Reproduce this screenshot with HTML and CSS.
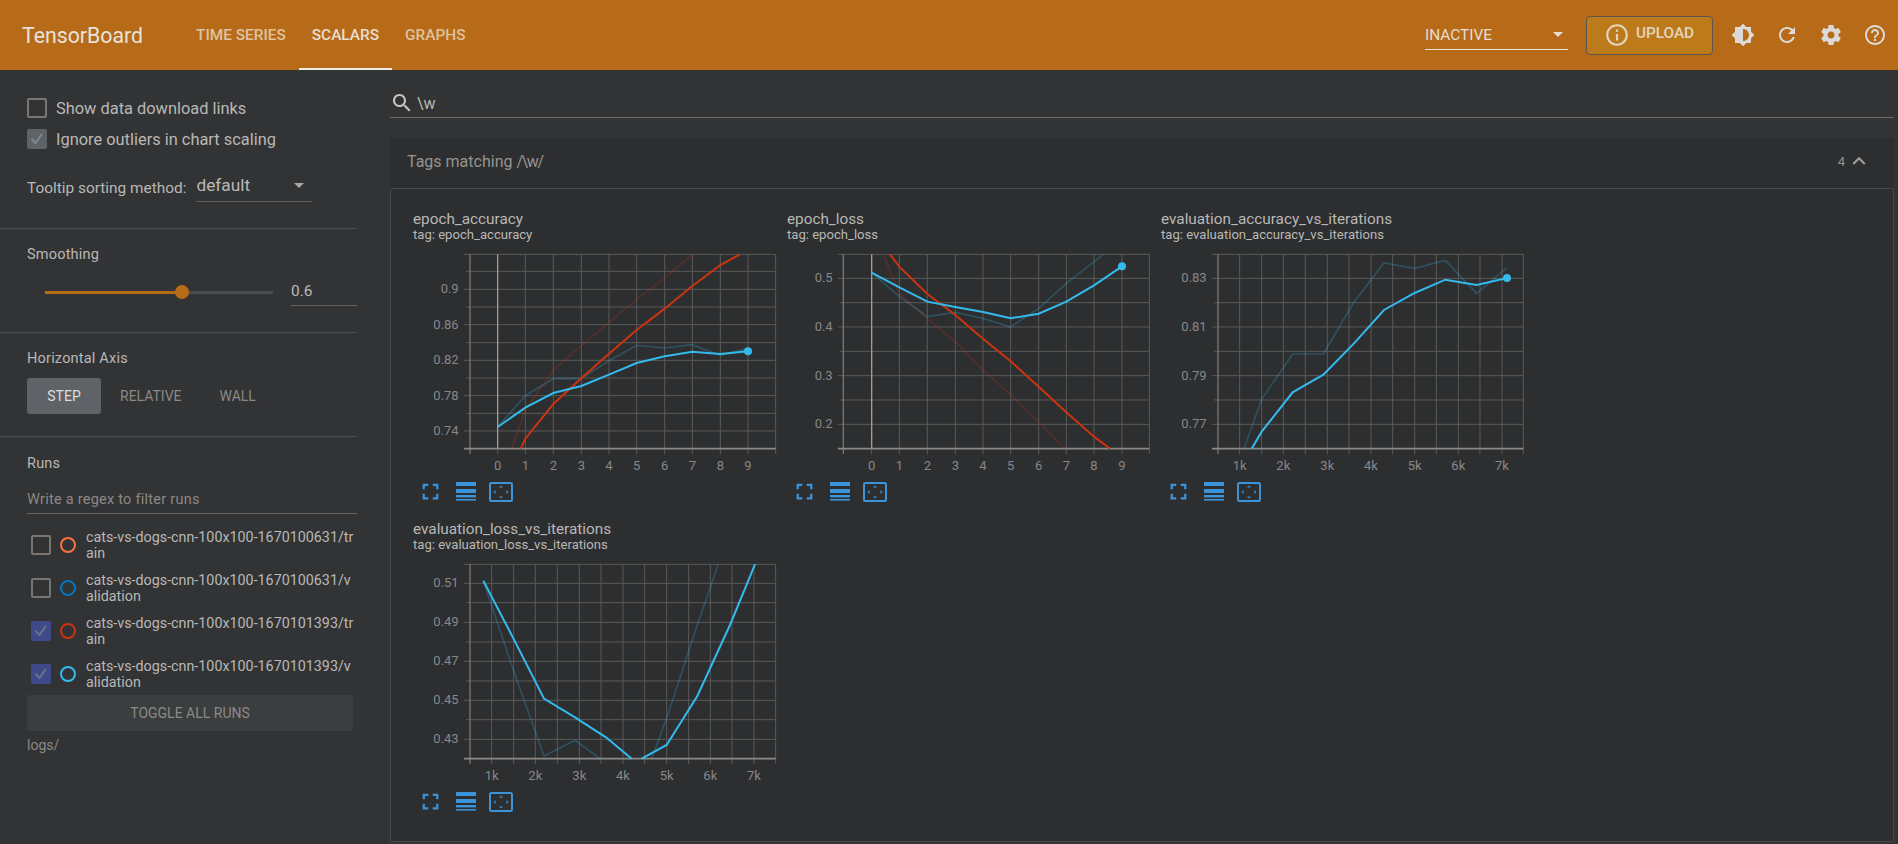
FILE: index.html
```html
<!DOCTYPE html>
<html lang="en">

<head>
  <meta charset="UTF-8" />
  <title>TensorBoard</title>
  <link rel="stylesheet" href="styles.css">
</head>

<body>
  <svg class="icon-defs" aria-hidden="true">
    <symbol id="i-fit" viewBox="0 0 24 24">
      <path d="M7 14H5v5h5v-2H7v-3zm-2-4h2V7h3V5H5v5zm12 7h-3v2h5v-5h-2v3zM14 5v2h3v3h2V5h-5z" />
    </symbol>
    <symbol id="i-lines" viewBox="0 0 20 19">
      <rect x="0" y="0" width="20" height="4" />
      <rect x="0" y="7" width="20" height="4" />
      <rect x="0" y="13" width="20" height="2.4" />
      <rect x="0" y="17" width="20" height="1.6" />
    </symbol>
    <symbol id="i-box" viewBox="0 0 24 20">
      <rect class="box-outline" x="1" y="1" width="22" height="18" rx="1.5" />
      <path d="M12 3.5l2 2h-4zM12 16.5l2-2h-4zM4.5 10l2-2v4zM19.5 10l-2-2v4z" />
    </symbol>
  </svg>

  <!-- Top bar -->
  <header class="topbar">
    <div class="logo">TensorBoard</div>
    <nav class="tabs">
      <a class="tab">TIME SERIES</a>
      <a class="tab active">SCALARS</a>
      <a class="tab">GRAPHS</a>
    </nav>
    <div class="topbar-right">
      <div class="plugin-select">
        <span>INACTIVE</span>
        <span class="caret"></span>
      </div>
      <button class="upload-btn">
        <svg class="info-icon" viewBox="0 0 24 24">
          <path d="M11 17h2v-6h-2v6zm1-15C6.48 2 2 6.48 2 12s4.48 10 10 10 10-4.48 10-10S17.52 2 12 2zm0 18c-4.41 0-8-3.59-8-8s3.59-8 8-8 8 3.59 8 8-3.59 8-8 8zM11 9h2V7h-2v2z" />
        </svg>
        <span class="upload-text">UPLOAD</span>
      </button>
      <div class="top-icons">
        <svg class="top-icon" viewBox="0 0 24 24">
          <path d="M20 15.31L23.31 12 20 8.69V4h-4.69L12 .69 8.69 4H4v4.69L.69 12 4 15.31V20h4.69L12 23.31 15.31 20H20v-4.69zM12 18V6c3.31 0 6 2.69 6 6s-2.69 6-6 6z" />
        </svg>
        <svg class="top-icon" viewBox="0 0 24 24">
          <path d="M17.65 6.35C16.2 4.9 14.21 4 12 4c-4.42 0-7.99 3.58-7.99 8s3.57 8 7.99 8c3.73 0 6.84-2.55 7.73-6h-2.08c-.82 2.33-3.04 4-5.65 4-3.31 0-6-2.69-6-6s2.69-6 6-6c1.66 0 3.14.69 4.22 1.78L13 11h7V4l-2.35 2.35z" />
        </svg>
        <svg class="top-icon" viewBox="0 0 24 24">
          <path d="M19.43 12.98c.04-.32.07-.64.07-.98s-.03-.66-.07-.98l2.11-1.65c.19-.15.24-.42.12-.64l-2-3.46c-.12-.22-.39-.3-.61-.22l-2.49 1c-.52-.4-1.08-.73-1.69-.98l-.38-2.65C14.46 2.18 14.25 2 14 2h-4c-.25 0-.46.18-.49.42l-.38 2.65c-.61.25-1.17.59-1.69.98l-2.49-1c-.23-.09-.49 0-.61.22l-2 3.46c-.13.22-.07.49.12.64l2.11 1.65c-.04.32-.07.65-.07.98s.03.66.07.98l-2.11 1.65c-.19.15-.24.42-.12.64l2 3.46c.12.22.39.3.61.22l2.49-1c.52.4 1.08.73 1.69.98l.38 2.65c.03.24.24.42.49.42h4c.25 0 .46-.18.49-.42l.38-2.65c.61-.25 1.17-.59 1.69-.98l2.49 1c.23.09.49 0 .61-.22l2-3.46c.12-.22.07-.49-.12-.64l-2.11-1.65zM12 15.5c-1.93 0-3.5-1.57-3.5-3.5s1.57-3.5 3.5-3.5 3.5 1.57 3.5 3.5-1.57 3.5-3.5 3.5z" />
        </svg>
        <svg class="top-icon" viewBox="0 0 24 24">
          <path d="M11 18h2v-2h-2v2zm1-16C6.48 2 2 6.48 2 12s4.48 10 10 10 10-4.48 10-10S17.52 2 12 2zm0 18c-4.41 0-8-3.59-8-8s3.59-8 8-8 8 3.59 8 8-3.59 8-8 8zm0-14c-2.21 0-4 1.79-4 4h2c0-1.1.9-2 2-2s2 .9 2 2c0 2-3 1.75-3 5h2c0-2.25 3-2.5 3-5 0-2.21-1.79-4-4-4z" />
        </svg>
      </div>
    </div>
  </header>

  <div class="layout">
    <!-- Sidebar -->
    <aside class="sidebar">
      <section class="side-section options">
        <label class="check-row">
          <span class="box"></span>
          Show data download links
        </label>
        <label class="check-row">
          <span class="box checked-grey">
            <svg viewBox="0 0 20 20"><path d="M3 9.5l5 5.500L16 4" /></svg>
          </span>
          Ignore outliers in chart scaling
        </label>
        <div class="tooltip-row">
          <span>Tooltip sorting method:</span>
          <div class="tooltip-select">
            <span>default</span>
            <span class="caret"></span>
          </div>
        </div>
      </section>

      <section class="side-section smoothing">
        <div class="side-title">Smoothing</div>
        <div class="slider-row">
          <div class="slider">
            <div class="slider-fill"></div>
            <div class="slider-thumb"></div>
          </div>
          <div class="slider-value">0.6</div>
        </div>
      </section>

      <section class="side-section axis">
        <div class="side-title">Horizontal Axis</div>
        <div class="axis-btns">
          <span class="axis-btn active">STEP</span>
          <span class="axis-btn">RELATIVE</span>
          <span class="axis-btn">WALL</span>
        </div>
      </section>

      <section class="runs">
        <div class="side-title">Runs</div>
        <div class="run-filter">Write a regex to filter runs</div>
        <div class="run-list">
          <div class="run-row">
            <span class="box"></span>
            <span class="run-dot dot-orange"></span>
            <span class="run-name">cats-vs-dogs-cnn-100x100-1670100631/train</span>
          </div>
          <div class="run-row">
            <span class="box"></span>
            <span class="run-dot dot-blue"></span>
            <span class="run-name">cats-vs-dogs-cnn-100x100-1670100631/validation</span>
          </div>
          <div class="run-row">
            <span class="box checked-blue">
              <svg viewBox="0 0 20 20"><path d="M3 9.5l5 5.500L16 4" /></svg>
            </span>
            <span class="run-dot dot-red"></span>
            <span class="run-name">cats-vs-dogs-cnn-100x100-1670101393/train</span>
          </div>
          <div class="run-row">
            <span class="box checked-blue">
              <svg viewBox="0 0 20 20"><path d="M3 9.5l5 5.500L16 4" /></svg>
            </span>
            <span class="run-dot dot-cyan"></span>
            <span class="run-name">cats-vs-dogs-cnn-100x100-1670101393/validation</span>
          </div>
        </div>
        <div class="toggle-runs">TOGGLE ALL RUNS</div>
        <div class="logdir">logs/</div>
      </section>
    </aside>

    <!-- Charts -->
    <main class="main">
      <div class="search">
        <svg class="search-icon" viewBox="0 0 24 24">
          <path d="M15.5 14h-.79l-.28-.27C15.41 12.59 16 11.11 16 9.5 16 5.91 13.09 3 9.5 3S3 5.91 3 9.5 5.91 16 9.5 16c1.61 0 3.09-.59 4.23-1.57l.27.28v.79l5 4.99L20.49 19l-4.99-5zm-6 0C7.01 14 5 11.99 5 9.5S7.01 5 9.5 5 14 7.01 14 9.5 11.99 14 9.5 14z" />
        </svg>
        <span class="search-text">\w</span>
      </div>

      <div class="tag-header">
        <span>Tags matching <span class="regex">/\w/</span></span>
        <div class="tag-count">
          <span>4</span>
          <svg class="chevron" viewBox="0 0 24 24"><path d="M12 8l-6 6 1.41 1.41L12 10.83l4.59 4.58L18 14z" /></svg>
        </div>
      </div>

      <div class="chart-grid">
        <!-- the plot groups are drawn in 1/3 px units, labels in px -->
        <div class="chart-card">
          <div class="chart-title">epoch_accuracy</div>
          <div class="chart-tag">tag: epoch_accuracy</div>
          <svg class="chart" viewBox="13 50 370 225">
            <g transform="scale(0.33333)">
              <path class="grid" d="M192 163H1127M198 214H1127M192 268H1127M198 321H1127M192 374H1127M198 428H1127M192 481H1127M198 534H1127M192 587H1127M198 640H1127M192 693H1127M376 163V762M460 163V762M544 163V762M627 163V762M710 163V762M794 163V762M877 163V762M961 163V762M1044 163V762M1127 163V762M293 746V762" />
              <path class="axis-y" d="M210 163V762" />
              <path class="zero" d="M293 163V746" />
              <path class="axis-x" d="M192 746H1127" />
              <path class="line red-faint" d="M335 746L376 630L460 510L544 437L627 367L710 298L794 235L877 163" />
              <path class="line blue-faint" d="M293 681L376 587L460 536L544 536L627 482L710 436L794 444L877 434L961 466L1044 445" />
              <path class="line red" d="M362 746L376 716L460 612L544 535L627 461L710 390L794 326L877 258L961 195L1020 163" />
              <path class="line blue" d="M293 681L376 623L460 579L544 558L627 524L710 489L794 469L877 455L961 462L1044 454" />
              <circle class="dot" cx="1044" cy="454" r="12" />
            </g>
            <g class="y-labels">
              <text x="58.7" y="93.3">0.9</text>
              <text x="58.7" y="128.7">0.86</text>
              <text x="58.7" y="164.3">0.82</text>
              <text x="58.7" y="199.7">0.78</text>
              <text x="58.7" y="235">0.74</text>
            </g>
            <g class="x-labels">
              <text x="97.7" y="270">0</text>
              <text x="125.3" y="270">1</text>
              <text x="153.3" y="270">2</text>
              <text x="181.3" y="270">3</text>
              <text x="209" y="270">4</text>
              <text x="236.7" y="270">5</text>
              <text x="264.7" y="270">6</text>
              <text x="292.3" y="270">7</text>
              <text x="320.3" y="270">8</text>
              <text x="348" y="270">9</text>
            </g>
          </svg>
          <div class="chart-actions">
            <svg class="act-fit"><use href="#i-fit" /></svg>
            <svg class="act-lines"><use href="#i-lines" /></svg>
            <svg class="act-box"><use href="#i-box" /></svg>
          </div>
        </div>

        <div class="chart-card">
          <div class="chart-title">epoch_loss</div>
          <div class="chart-tag">tag: epoch_loss</div>
          <svg class="chart" viewBox="7 50 370 225">
            <g transform="scale(0.33333)">
              <path class="grid" d="M174 163H1108M174 235H1108M180 308H1108M174 381H1108M180 454H1108M174 527H1108M180 600H1108M174 673H1108M358 163V762M442 163V762M526 163V762M609 163V762M692 163V762M776 163V762M859 163V762M942 163V762M1026 163V762M1108 163V762M275 746V762" />
              <path class="axis-y" d="M190 163V762" />
              <path class="zero" d="M275 163V746" />
              <path class="axis-x" d="M174 746H1108" />
              <path class="line red-faint" d="M310 163L358 280L442 355L526 425L609 510L692 585L776 665L855 746" />
              <path class="line blue-faint" d="M275 218L358 290L442 350L526 337L609 355L692 381L776 325L859 250L970 163" />
              <path class="line red" d="M330 163L358 200L442 282L526 345L609 416L692 484L776 560L859 637L942 710L990 746" />
              <path class="line blue" d="M275 218L358 262L442 305L526 321L609 336L692 355L776 341L859 305L942 256L1026 199" />
              <circle class="dot" cx="1026" cy="199" r="12" />
            </g>
            <g class="y-labels">
              <text x="52.7" y="82.3">0.5</text>
              <text x="52.7" y="131">0.4</text>
              <text x="52.7" y="179.7">0.3</text>
              <text x="52.7" y="228.3">0.2</text>
            </g>
            <g class="x-labels">
              <text x="91.7" y="270">0</text>
              <text x="119.3" y="270">1</text>
              <text x="147.3" y="270">2</text>
              <text x="175.3" y="270">3</text>
              <text x="203" y="270">4</text>
              <text x="230.7" y="270">5</text>
              <text x="258.7" y="270">6</text>
              <text x="286.3" y="270">7</text>
              <text x="314" y="270">8</text>
              <text x="342" y="270">9</text>
            </g>
          </svg>
          <div class="chart-actions">
            <svg class="act-fit"><use href="#i-fit" /></svg>
            <svg class="act-lines"><use href="#i-lines" /></svg>
            <svg class="act-box"><use href="#i-box" /></svg>
          </div>
        </div>

        <div class="chart-card">
          <div class="chart-title">evaluation_accuracy_vs_iterations</div>
          <div class="chart-tag">tag: evaluation_accuracy_vs_iterations</div>
          <svg class="chart" viewBox="11 50 370 225">
            <g transform="scale(0.33333)">
              <path class="grid" d="M186 163H1120M186 235H1120M192 308H1120M186 381H1120M192 454H1120M186 527H1120M192 600H1120M186 673H1120M269 163V762M335 163V762M400 163V762M466 163V762M532 163V762M597 163V762M663 163V762M728 163V762M794 163V762M859 163V762M925 163V762M990 163V762M1056 163V762M1120 163V762" />
              <path class="axis-y" d="M204 163V762" />
              <path class="axis-x" d="M186 746H1120" />
              <path class="line blue-faint" d="M282 746L335 598L428 462L520 462L612 306L702 189L794 205L886 181L980 280L1071 203" />
              <path class="line blue" d="M305 746L335 695L428 577L520 524L612 430L702 330L794 279L886 239L980 255L1071 234" />
              <circle class="dot" cx="1071" cy="234" r="12" />
            </g>
            <g class="y-labels">
              <text x="56.7" y="82.3">0.83</text>
              <text x="56.7" y="131">0.81</text>
              <text x="56.7" y="179.7">0.79</text>
              <text x="56.7" y="228.3">0.77</text>
            </g>
            <g class="x-labels">
              <text x="89.7" y="270">1k</text>
              <text x="133.3" y="270">2k</text>
              <text x="177.3" y="270">3k</text>
              <text x="221" y="270">4k</text>
              <text x="264.7" y="270">5k</text>
              <text x="308.3" y="270">6k</text>
              <text x="352" y="270">7k</text>
            </g>
          </svg>
          <div class="chart-actions">
            <svg class="act-fit"><use href="#i-fit" /></svg>
            <svg class="act-lines"><use href="#i-lines" /></svg>
            <svg class="act-box"><use href="#i-box" /></svg>
          </div>
        </div>

        <div class="chart-card">
          <div class="chart-title">evaluation_loss_vs_iterations</div>
          <div class="chart-tag">tag: evaluation_loss_vs_iterations</div>
          <svg class="chart" viewBox="13 50 370 225">
            <g transform="scale(0.33333)">
              <path class="grid" d="M192 163H1127M192 220H1127M198 278H1127M192 337H1127M198 396H1127M192 454H1127M198 513H1127M192 571H1127M198 629H1127M192 688H1127M275 163V762M341 163V762M406 163V762M472 163V762M538 163V762M603 163V762M669 163V762M734 163V762M800 163V762M866 163V762M931 163V762M996 163V762M1062 163V762M1127 163V762" />
              <path class="axis-y" d="M210 163V762" />
              <path class="axis-x" d="M192 746H1127" />
              <path class="line blue-faint" d="M250 212L340 480L432 738L525 691L600 746M755 746L800 625L892 345L955 163" />
              <path class="line blue" d="M250 212L340 385L432 566L525 622L618 682L695 746M725 746L800 705L892 558L990 345L1065 163" />
            </g>
            <g class="y-labels">
              <text x="58.7" y="77.3">0.51</text>
              <text x="58.7" y="116.3">0.49</text>
              <text x="58.7" y="155.3">0.47</text>
              <text x="58.7" y="194.3">0.45</text>
              <text x="58.7" y="233.3">0.43</text>
            </g>
            <g class="x-labels">
              <text x="91.7" y="270">1k</text>
              <text x="135.3" y="270">2k</text>
              <text x="179.3" y="270">3k</text>
              <text x="223" y="270">4k</text>
              <text x="266.7" y="270">5k</text>
              <text x="310.3" y="270">6k</text>
              <text x="354" y="270">7k</text>
            </g>
          </svg>
          <div class="chart-actions">
            <svg class="act-fit"><use href="#i-fit" /></svg>
            <svg class="act-lines"><use href="#i-lines" /></svg>
            <svg class="act-box"><use href="#i-box" /></svg>
          </div>
        </div>
      </div>
    </main>
  </div>
</body>

</html>
```

FILE: styles.css
```css
:root {
  --orange: #b76a18;
  --bg: #323335;
  --card: #2d2e30;
  --divider: #4b4c4d;
  --text: #b9b8b6;
  --muted: #8b8985;
}

* {
  box-sizing: border-box;
}

body {
  margin: 0;
  height: 100vh;
  overflow: hidden;
  display: flex;
  flex-direction: column;
  background: var(--bg);
  color: var(--text);
  font-family: Roboto, sans-serif;
}

.icon-defs {
  display: none;
}

/* top bar */
.topbar {
  height: 70px;
  flex: none;
  display: flex;
  align-items: center;
  background: var(--orange);
  color: #e6e3de;
}

.logo {
  margin-left: 22px;
  width: 161px;
  font-size: 21.3px;
}

.tabs {
  display: flex;
  height: 100%;
}

.tab {
  display: flex;
  align-items: center;
  padding: 1px 13px 0;
  font-size: 15.4px;
  font-weight: 500;
  color: #dfc3a0;
  border-bottom: 2px solid transparent;
}

.tab.active {
  color: #ecdfcf;
  border-bottom-color: #f0ece6;
}

.topbar-right {
  margin-left: auto;
  display: flex;
  align-items: center;
}

.plugin-select {
  width: 143px;
  height: 30px;
  display: flex;
  align-items: center;
  justify-content: space-between;
  padding-right: 5px;
  font-size: 15.4px;
  color: #e6ded2;
  border-bottom: 1px solid #eee3d2;
}

.caret {
  width: 0;
  height: 0;
  border-left: 5px solid transparent;
  border-right: 5px solid transparent;
  border-top: 5px solid currentColor;
}

.upload-btn {
  margin-left: 18px;
  width: 127px;
  height: 39px;
  display: flex;
  align-items: center;
  padding: 0 0 0 17px;
  gap: 6px;
  background: #bd7a1b;
  border: 1px solid #5a5550;
  border-radius: 4px;
  font-family: Roboto, sans-serif;
  font-size: 15.3px;
  font-weight: 500;
  color: #e2d6c1;
}

.upload-text {
  padding-bottom: 4px;
}

.info-icon {
  width: 26px;
  height: 26px;
  fill: #e2d6c1;
}

.top-icons {
  margin-left: 18px;
  margin-right: 11px;
  display: flex;
  gap: 20px;
}

.top-icon {
  width: 24px;
  height: 24px;
  fill: #dcdad6;
}

/* layout */
.layout {
  flex: 1;
  min-height: 0;
  display: flex;
}

.sidebar {
  width: 357px;
  flex: none;
}

.side-section {
  padding-left: 27px;
  border-bottom: 1px solid var(--divider);
}

.side-title {
  font-size: 14.5px;
  letter-spacing: 0.2px;
}

/* options */
.options {
  height: 159px;
  padding-top: 28px;
}

.check-row {
  display: flex;
  align-items: center;
  gap: 9px;
  height: 20px;
  margin-bottom: 11px;
  font-size: 16.4px;
}

.box {
  width: 20px;
  height: 20px;
  flex: none;
  border: 2px solid #7a756d;
  border-radius: 2px;
}

.box svg {
  display: block;
  width: 100%;
  height: 100%;
  fill: none;
  stroke-width: 2.5;
}

.checked-grey {
  background: #5f6368;
  border-color: #5f6368;
}

.checked-grey svg {
  stroke: #7f8a94;
}

.checked-blue {
  background: #3f4a8a;
  border-color: #3f4a8a;
}

.checked-blue svg {
  stroke: #6c7284;
}

.tooltip-row {
  display: flex;
  align-items: center;
  margin-top: 24px;
  font-size: 15.4px;
  gap: 10px;
}

.tooltip-select {
  width: 116px;
  height: 29px;
  display: flex;
  align-items: center;
  justify-content: space-between;
  padding: 0 8px 4px 0;
  font-size: 17.3px;
  border-bottom: 1px solid #5e5e5c;
}

.tooltip-select .caret {
  color: #a9a7a2;
}

/* smoothing */
.smoothing {
  height: 104px;
  padding-top: 17px;
}

.slider-row {
  display: flex;
  align-items: center;
  margin-top: 15px;
}

.slider {
  position: relative;
  width: 228px;
  height: 3px;
  margin-left: 18px;
  background: #4a4b4c;
}

.slider-fill {
  width: 137px;
  height: 100%;
  background: var(--orange);
}

.slider-thumb {
  position: absolute;
  top: -6px;
  left: 130px;
  width: 14px;
  height: 14px;
  border-radius: 50%;
  background: var(--orange);
}

.slider-value {
  width: 66px;
  height: 28px;
  margin-left: 18px;
  font-size: 15.5px;
  line-height: 26px;
  border-bottom: 1px solid #5e5e5c;
}

/* axis */
.axis {
  height: 104px;
  padding-top: 17px;
}

.axis-btns {
  display: flex;
  align-items: center;
  margin-top: 11px;
  font-size: 14px;
  color: var(--muted);
}

.axis-btn {
  height: 36px;
  line-height: 36px;
  padding: 0 19px;
  border-radius: 3px;
}

.axis-btn.active {
  width: 74px;
  padding: 0;
  text-align: center;
  background: #5f6368;
  color: #dedede;
}

/* runs */
.runs {
  padding-left: 27px;
  padding-top: 18px;
}

.run-filter {
  width: 330px;
  height: 30px;
  margin-top: 12px;
  padding-top: 1px;
  line-height: 30px;
  font-size: 14.5px;
  letter-spacing: 0.25px;
  color: var(--muted);
  border-bottom: 1px solid #646360;
}

.run-list {
  margin-top: 9px;
}

.run-row {
  width: 330px;
  height: 43px;
  display: flex;
  align-items: center;
  padding-left: 4px;
}

.run-row .box {
  margin-right: 9px;
}

.run-dot {
  width: 16px;
  height: 16px;
  flex: none;
  margin-right: 10px;
  border: 2px solid;
  border-radius: 50%;
}

.dot-orange {
  border-color: #ff7043;
}

.dot-blue {
  border-color: #0077bb;
}

.dot-red {
  border-color: #cc3311;
}

.dot-cyan {
  border-color: #33bbee;
}

.run-name {
  flex: 1;
  min-width: 0;
  font-size: 14.3px;
  line-height: 16px;
  word-break: break-all;
}

.toggle-runs {
  width: 326px;
  height: 36px;
  line-height: 36px;
  text-align: center;
  font-size: 14px;
  border-radius: 3px;
  background: #3b3e3f;
  color: var(--muted);
}

.logdir {
  margin-top: 6px;
  font-size: 14px;
  color: var(--muted);
}

/* main */
.main {
  flex: 1;
  min-width: 0;
  margin-left: 33px;
  margin-right: 4px;
  padding-top: 18px;
  display: flex;
  flex-direction: column;
}

.search {
  height: 30px;
  display: flex;
  align-items: center;
  gap: 3px;
  font-size: 16px;
  border-bottom: 1px solid #6b6a68;
}

.search-icon {
  width: 24px;
  height: 24px;
  fill: #c8c6c2;
}

.search-text {
  padding-top: 2px;
}

.tag-header {
  height: 50px;
  margin-top: 20px;
  display: flex;
  align-items: center;
  justify-content: space-between;
  padding: 0 22px 4px 17px;
  background: var(--card);
  font-size: 16px;
  color: #96948f;
}

.regex {
  letter-spacing: -1.4px;
}

.tag-count {
  display: flex;
  align-items: center;
  gap: 1px;
  font-size: 13px;
}

.chevron {
  width: 26px;
  height: 26px;
  fill: #a09e9a;
}

.chart-grid {
  flex: 1;
  display: grid;
  grid-template-columns: repeat(3, 374px);
  grid-auto-rows: 310px;
  padding: 20px 0 0 22px;
  margin-bottom: 2px;
  background: var(--card);
  border: 1px solid #47484a;
  border-radius: 2px;
}

.chart-title {
  font-size: 15.3px;
  line-height: 20px;
}

.chart-tag {
  font-size: 13.1px;
  line-height: 14px;
  margin-top: -1px;
}

.chart {
  display: block;
  width: 370px;
  height: 225px;
  margin-top: 8px;
}

.grid {
  fill: none;
  stroke: #5a5a5a;
  stroke-width: 3;
}

.axis-y {
  fill: none;
  stroke: #777;
  stroke-width: 4;
}

.axis-x {
  fill: none;
  stroke: #8c8a87;
  stroke-width: 5;
}

.zero {
  fill: none;
  stroke: #a09d98;
  stroke-width: 4;
}

.line {
  fill: none;
  stroke-width: 6;
}

.red {
  stroke: #cc3311;
}

.red-faint {
  stroke: #cc3311;
  stroke-opacity: 0.25;
  stroke-width: 5;
}

.blue {
  stroke: #33bbee;
}

.blue-faint {
  stroke: #33bbee;
  stroke-opacity: 0.25;
  stroke-width: 5;
}

.dot {
  fill: #33bbee;
}

.y-labels text,
.x-labels text {
  font-family: Roboto, sans-serif;
  font-size: 13px;
  fill: #87878a;
}

.y-labels text {
  text-anchor: end;
}

.x-labels text {
  text-anchor: middle;
}

.chart-actions {
  display: flex;
  align-items: center;
  fill: #3b94d9;
  padding-left: 4px;
  margin-top: 3px;
}

.act-fit {
  width: 27px;
  height: 27px;
}

.act-lines {
  width: 20px;
  height: 19px;
  margin-left: 12px;
}

.act-box {
  width: 24px;
  height: 20px;
  margin-left: 13px;
}

.box-outline {
  fill: none;
  stroke: #3b94d9;
  stroke-width: 2;
}
```
